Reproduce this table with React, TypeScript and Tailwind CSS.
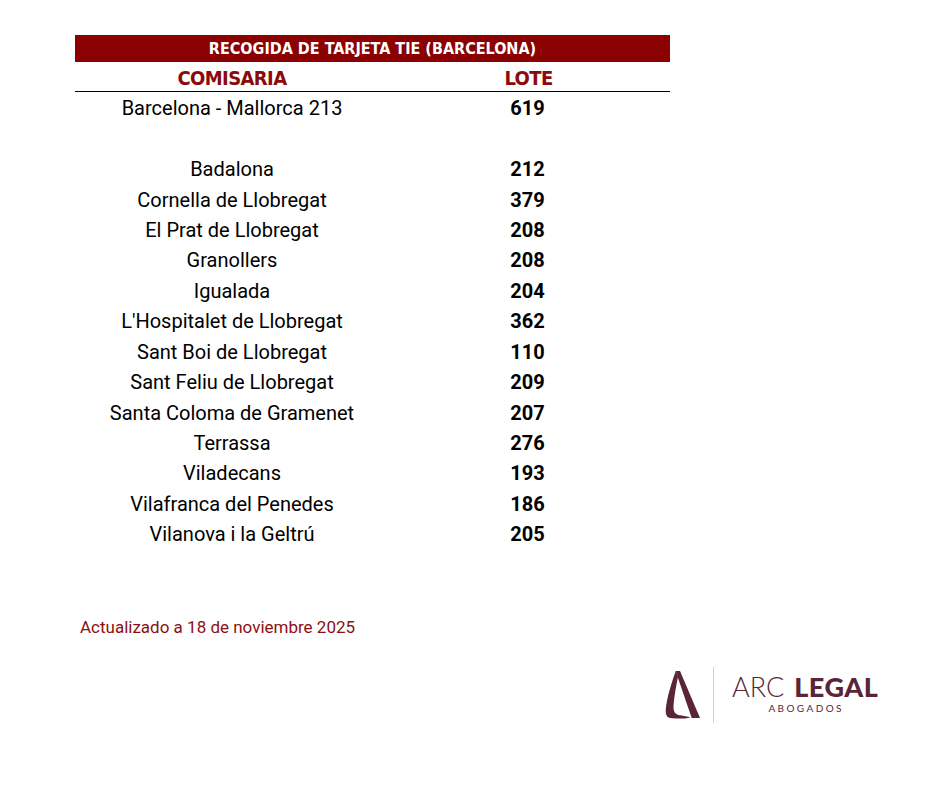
import React from 'react'

interface IRow {
  name: string
  lote: string
}

const rows: IRow[] = [
  { name: 'Barcelona - Mallorca 213', lote: '619' },
  { name: '', lote: '' },
  { name: 'Badalona', lote: '212' },
  { name: 'Cornella de Llobregat', lote: '379' },
  { name: 'El Prat de Llobregat', lote: '208' },
  { name: 'Granollers', lote: '208' },
  { name: 'Igualada', lote: '204' },
  { name: "L'Hospitalet de Llobregat", lote: '362' },
  { name: 'Sant Boi de Llobregat', lote: '110' },
  { name: 'Sant Feliu de Llobregat', lote: '209' },
  { name: 'Santa Coloma de Gramenet', lote: '207' },
  { name: 'Terrassa', lote: '276' },
  { name: 'Viladecans', lote: '193' },
  { name: 'Vilafranca del Penedes', lote: '186' },
  { name: 'Vilanova i la Geltrú', lote: '205' },
]

const narrow = "font-['Liberation_Sans_Narrow','DejaVu_Sans_Condensed',Roboto,sans-serif]"

const Logo = () => (
  <div className="flex items-start">
    <svg width="55" height="62" viewBox="0 0 55 62" className="text-[#5a2439]">
      <path d="M20.7 6 L25 6 L45 53 L36.7 53 L23 13 Z" fill="currentColor" />
      <path
        d="M20.7 6 L23 12 C20.5 24 19 33 18.5 41 C18.3 46.5 20 49.5 25 50.3 C29 51 32.5 51.6 35.5 52.6 L30 53.4 C24 53.7 17 53.7 13.5 52.5 C10.5 51 10.3 46 11.3 40 C12.8 30 16.5 18 20.7 6 Z"
        fill="currentColor"
      />
    </svg>
    <div className="ml-[3px] mt-[2px] h-[56px] w-px bg-[#dccdd1]" />
    <div className="ml-[18px] flex flex-col items-center pt-[8px] text-[#5a2439] font-['Lato','Open_Sans',sans-serif]">
      <div className="flex items-baseline text-[27px] leading-none">
        <span className="font-light">ARC</span>
        <span className="ml-[10px] font-black tracking-[0.5px]">LEGAL</span>
      </div>
      <div className="mt-[3px] pl-[2px] text-[10px] leading-none tracking-[2.4px]">
        ABOGADOS
      </div>
    </div>
  </div>
)

export default function App() {
  return (
    <div className="w-[940px] h-[788px] bg-white relative font-['Roboto','Inter',sans-serif]">
      <div className="pt-[35px] pl-[75px]">
        <div className="w-[595px]">
          <div
            className={`h-[27px] bg-[#8b0000] flex items-center justify-center text-white text-[16px] font-bold ${narrow}`}
          >
            RECOGIDA DE TARJETA TIE (BARCELONA)
          </div>
          <div
            className={`grid grid-cols-[314px_281px] h-[30px] pt-[1px] items-center border-b-[1.5px] border-black text-[#8b0a0a] text-[20px] tracking-[-0.6px] font-bold ${narrow}`}
          >
            <div className="text-center">COMISARIA</div>
            <div className="text-center pr-[2px]">LOTE</div>
          </div>
          <div className="pt-[1px]">
            {rows.map((r, i) => (
              <div
                key={i}
                className="grid grid-cols-[314px_281px] h-[30.45px] items-center text-[20px] text-black"
              >
                <div className="text-center">{r.name}</div>
                <div className="text-center font-bold pr-[4px]">{r.lote}</div>
              </div>
            ))}
          </div>
        </div>
        <div className="mt-[65px] pl-[5px] text-[17px] text-[#8b1010]">
          Actualizado a 18 de noviembre 2025
        </div>
      </div>
      <div className="absolute left-[655px] top-[665px]">
        <Logo />
      </div>
    </div>
  )
}
